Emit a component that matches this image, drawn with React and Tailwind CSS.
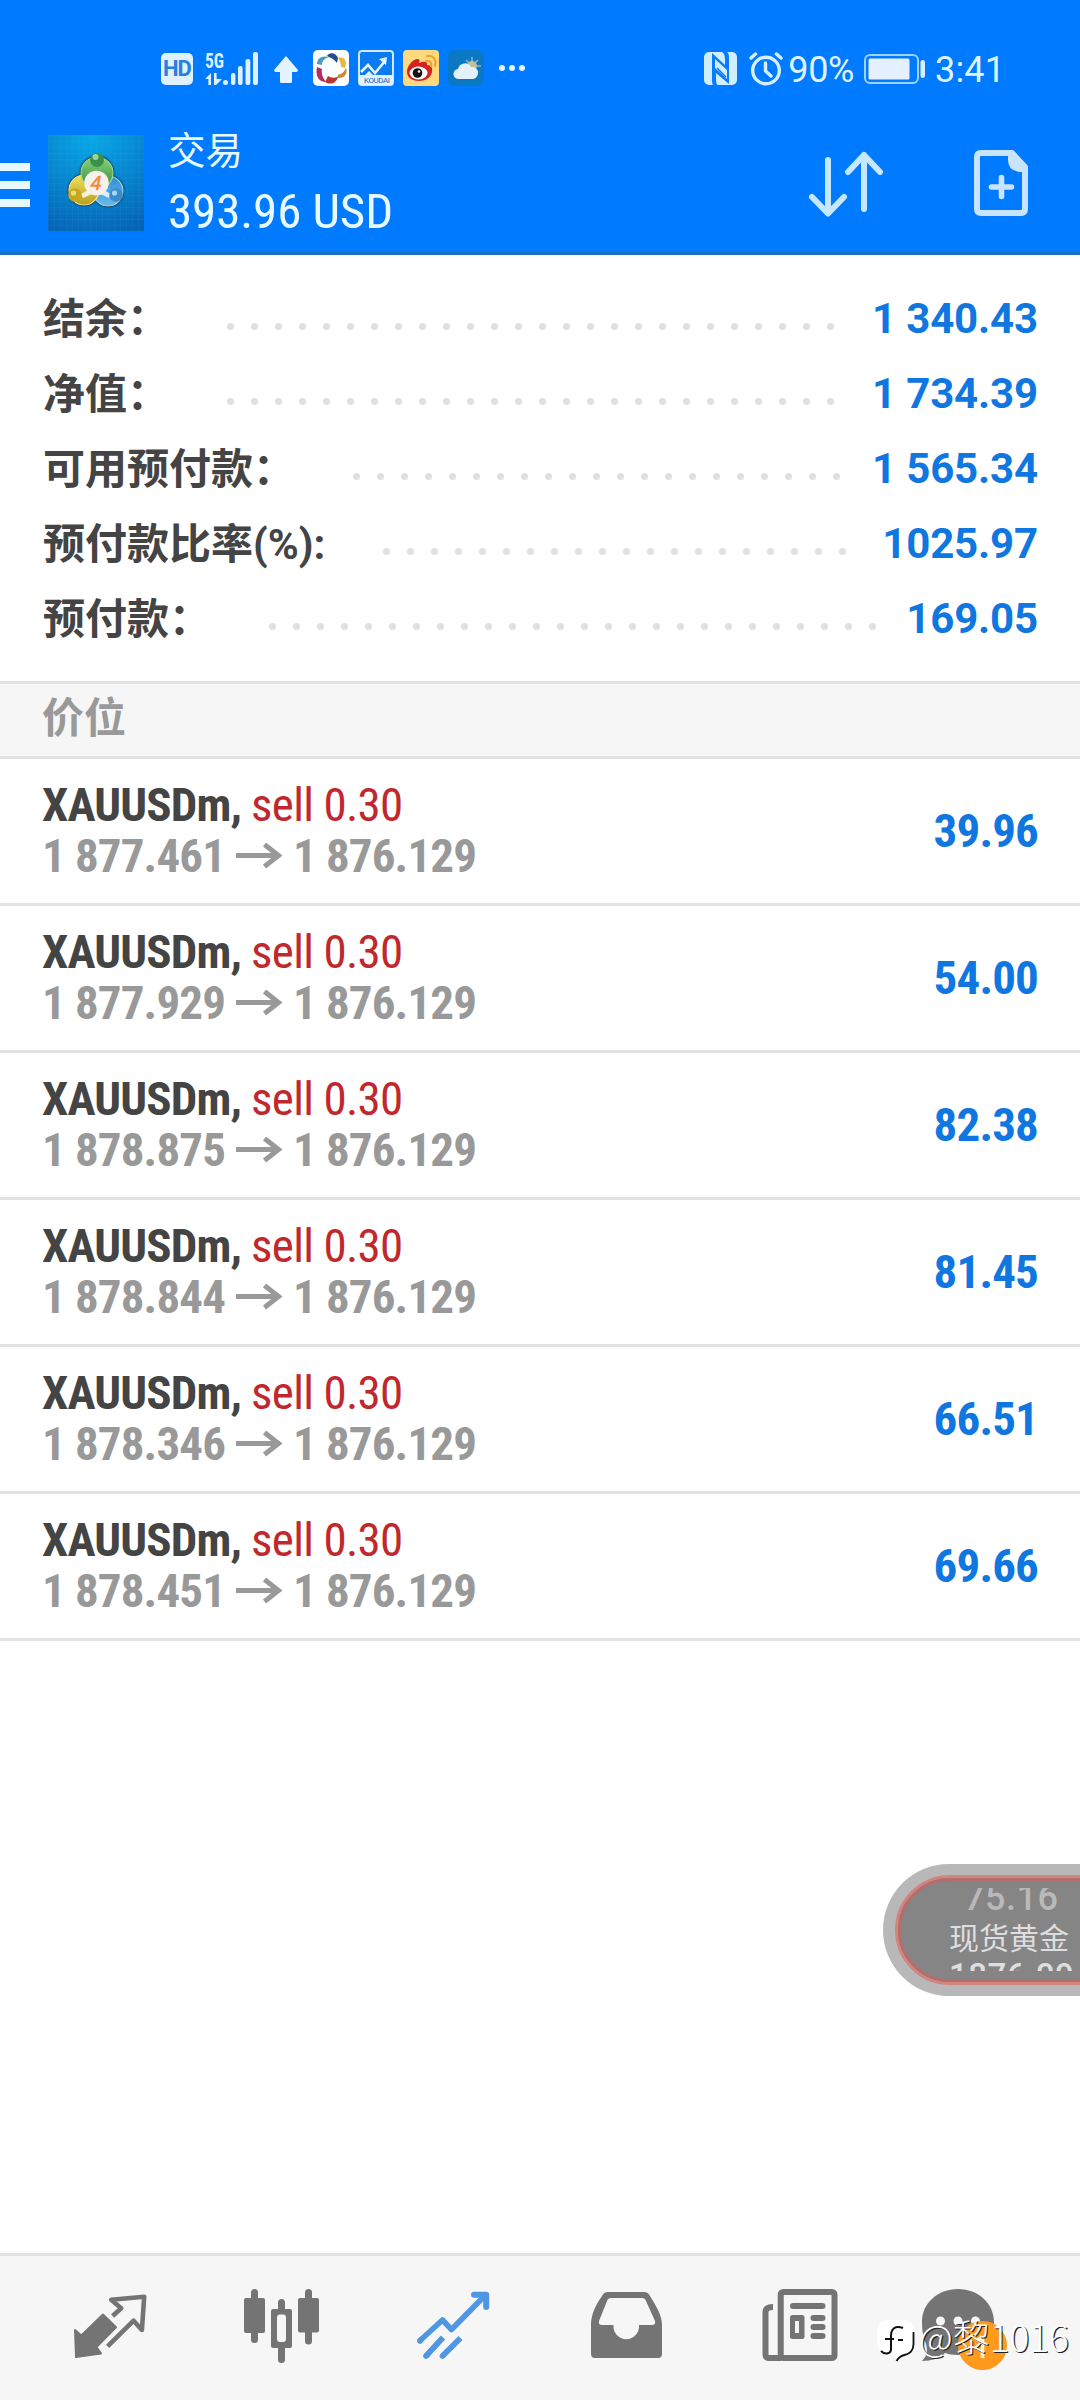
import React from "react";

const accountRows = [
  { label: "结余：", value: "1 340.43", dots: 26 },
  { label: "净值：", value: "1 734.39", dots: 26 },
  { label: "可用预付款：", value: "1 565.34", dots: 21 },
  { label: "预付款比率(%):", value: "1025.97", dots: 20 },
  { label: "预付款：", value: "169.05", dots: 26 },
];

const positions = [
  { open: "1 877.461", current: "1 876.129", profit: "39.96" },
  { open: "1 877.929", current: "1 876.129", profit: "54.00" },
  { open: "1 878.875", current: "1 876.129", profit: "82.38" },
  { open: "1 878.844", current: "1 876.129", profit: "81.45" },
  { open: "1 878.346", current: "1 876.129", profit: "66.51" },
  { open: "1 878.451", current: "1 876.129", profit: "69.66" },
];

const SignalIcon = () => (
  <svg width="54" height="36" viewBox="0 0 54 36" fill="#dff1ff" className="overflow-visible">
    <text x="0" y="16.500" fontSize="21" fontWeight="700" textLength="19" lengthAdjust="spacingAndGlyphs" className="font-['Roboto_Condensed']">
      5G
    </text>
    <path d="M0 28l6-6v12H3.400v-6zM9 22h2.600v6H17l-6 6H9z" />
    <rect x="18" y="29" width="5" height="5" rx="2.500" />
    <rect x="26" y="22" width="4.400" height="12" rx="2" />
    <rect x="33" y="15" width="4.600" height="19" rx="2" />
    <rect x="40.500" y="8" width="4.800" height="26" rx="2" />
    <rect x="48" y="1" width="5" height="33" rx="2" />
  </svg>
);

const RingAppIcon = () => (
  <svg width="36" height="36" viewBox="0 0 36 36">
    <rect width="36" height="36" rx="5" fill="#fff" />
    <path d="M14 6c2-4 9-4 11 2l-1 5c-3-4-6-5-10-7z" fill="#274b8c" />
    <path d="M4 14c0-6 5-9 12-7-5 2-7 4-7 8z" fill="#4b9cc0" />
    <path d="M25 8c6-2 10 3 7 10l-4-1c0-4-1-6-3-9z" fill="#e9b93e" />
    <path d="M33 18c2 5-1 11-9 10l1-3c4-1 6-3 8-7z" fill="#c98a31" />
    <path d="M25 27c-2 7-8 8-13 5l3-6c3 2 6 2 10 1z" fill="#b7382f" />
    <path d="M13 32c-7 0-11-6-9-15l5 2c-1 5 1 9 4 13z" fill="#b32a64" />
  </svg>
);

const KoudaiIcon = () => (
  <svg width="36" height="36" viewBox="0 0 36 36">
    <rect x="1" y="1" width="34" height="34" rx="3" fill="#0a7bf2" stroke="#cfeaff" strokeWidth="2" />
    <path d="M1 25h6l4-4 4 4h20v10H1z" fill="#e0f2ff" />
    <path d="M3 22l7-7 7 8 10-12" fill="none" stroke="#e6f3ff" strokeWidth="2.600" />
    <path d="M21 9l8-2-1 8z" fill="#e6f3ff" />
    <text x="6" y="33" fontSize="8" fill="#2a62ae" textLength="26" className="font-[Roboto]">
      KOUDAI
    </text>
  </svg>
);

const WeiboIcon = () => (
  <svg width="36" height="36" viewBox="0 0 36 36">
    <rect width="36" height="36" rx="4" fill="#ffd980" />
    <path d="M4 22c0-6 5-12 10-13 3 0 3 2 2 4 4-2 9-2 8 2 4 0 6 3 5 7-1 6-7 9-13 9S4 28 4 22z" fill="#d6231f" />
    <ellipse cx="15.500" cy="23" rx="9" ry="6.500" fill="#fff" />
    <circle cx="14.500" cy="23" r="4.800" fill="#111" />
    <circle cx="16" cy="21.500" r="1.300" fill="#fff" />
    <path d="M23 11c4-1 6 2 5 5M24 6c7-1 10 5 8 10" fill="none" stroke="#efa42f" strokeWidth="2.200" strokeLinecap="round" />
  </svg>
);

const WeatherIcon = () => (
  <svg width="36" height="36" viewBox="0 0 36 36">
    <rect width="36" height="36" rx="7" fill="#0b78c4" />
    <path d="M24 7v18M15 16h18M18 10l12 12M30 10L18 22" stroke="#9cb7ab" strokeWidth="1.500" />
    <circle cx="24" cy="16" r="5" fill="#c9bfa0" />
    <path d="M11 29a5 5 0 0 1-1-10 7 7 0 0 1 13-2 6 6 0 0 1 2 12z" fill="#e3f1fb" />
  </svg>
);

const NfcIcon = () => (
  <svg width="34" height="34" viewBox="0 0 34 34">
    <rect width="33" height="33" rx="5" fill="#cfeeff" />
    <path d="M8 1l13 12V9c0-4 0-7-3-9h5c2 1 2 4 2 7v25L12 21v5c0 4 0 6 3 8h-5c-2-1-2-4-2-7z" fill="#0a7bff" />
    <path d="M11 7l12 11v9L11 16z" fill="#cfeeff" />
    <path d="M13 16l9 9" stroke="#0a7bff" strokeWidth="1.500" />
  </svg>
);

const AlarmIcon = () => (
  <svg width="34" height="34" viewBox="0 0 34 34" fill="none" stroke="#d5efff" strokeLinecap="round">
    <circle cx="17" cy="18.500" r="13.300" strokeWidth="3.400" />
    <path d="M16.500 11v8l5.500 5" strokeWidth="3.400" strokeLinejoin="round" />
    <path d="M2 6l4.500-4M32 6l-4.500-4" strokeWidth="3.400" />
  </svg>
);

const StatusBar = () => (
  <div className="flex h-[135px] items-start pr-[80px] pl-[161px] text-[#dff3ff]">
    <div className="mt-[53px] flex h-[32px] w-8 items-center justify-center rounded-[5px] bg-[#dff1ff] font-[Roboto] text-[22px] leading-none font-bold tracking-[-0.8px] text-[#2a7fdc]">
      HD
    </div>
    <div className="mt-[51px] ml-3">
      <SignalIcon />
    </div>
    <svg className="mt-[55px] ml-[14px]" width="26" height="29" viewBox="0 0 26 29">
      <path d="M13 1L25 15q0 2-2 2h-4v10q0 1-1 1H8q-1 0-1-1V17H3q-2 0-2-2z" fill="#e3f3ff" />
    </svg>
    <div className="mt-[50px] ml-[14px] flex gap-[9px]">
      <RingAppIcon />
      <KoudaiIcon />
      <WeiboIcon />
      <WeatherIcon />
    </div>
    <div className="mt-[65px] ml-[15px] flex gap-1">
      <span className="size-1.5 rounded-full bg-[#dff3ff]" />
      <span className="size-1.5 rounded-full bg-[#dff3ff]" />
      <span className="size-1.5 rounded-full bg-[#dff3ff]" />
    </div>
    <div className="mt-[52px] ml-auto flex h-[34px] items-center font-[Roboto] text-[36px] leading-[34px]">
      <NfcIcon />
      <div className="ml-[11px]">
        <AlarmIcon />
      </div>
      <span className="mt-[2px] ml-[5px] tracking-[-0.4px]">90%</span>
      <svg className="ml-[10px]" width="61" height="30" viewBox="0 0 61 30">
        <rect x="1" y="1" width="53" height="28" rx="5" fill="none" stroke="#9ed3ff" strokeWidth="2" />
        <rect x="4.500" y="4.500" width="41" height="21" rx="1.500" fill="#e4f0ff" />
        <rect x="56.500" y="6" width="4.500" height="18" rx="2.200" fill="#d5efff" />
      </svg>
      <span className="mt-[2px] ml-[10px] w-[65px] tracking-[0.2px]">3:41</span>
    </div>
  </div>
);

const MetaTraderLogo = () => (
  <svg width="96" height="96" viewBox="0 0 96 96">
    <defs>
      <radialGradient id="logoBg" cx="45%" cy="0%" r="110%">
        <stop offset="0" stopColor="#08a9e6" />
        <stop offset="0.5" stopColor="#0786cf" />
        <stop offset="1" stopColor="#0661b3" />
      </radialGradient>
      <pattern id="logoGrid" width="6" height="6" patternUnits="userSpaceOnUse">
        <path d="M6 0H0V6" fill="none" stroke="#3fb2e6" strokeOpacity="0.14" strokeWidth="1" />
      </pattern>
      <linearGradient id="logoGreen" x1="0" y1="0" x2="0" y2="1">
        <stop offset="0" stopColor="#8ed27a" />
        <stop offset="1" stopColor="#2f8a3f" />
      </linearGradient>
      <linearGradient id="logoYellow" x1="0" y1="0" x2="0" y2="1">
        <stop offset="0" stopColor="#f0df5c" />
        <stop offset="1" stopColor="#b9a01f" />
      </linearGradient>
      <linearGradient id="logoBlue" x1="0" y1="0" x2="0" y2="1">
        <stop offset="0" stopColor="#2f8fd6" />
        <stop offset="1" stopColor="#69b9ee" />
      </linearGradient>
    </defs>
    <rect width="96" height="96" fill="url(#logoBg)" />
    <rect width="96" height="96" fill="url(#logoGrid)" />
    <g stroke="#0d4f80" strokeOpacity="0.35" strokeWidth="3">
      <circle cx="60" cy="56" r="16" />
      <circle cx="36" cy="55" r="16" />
      <circle cx="49" cy="38" r="17" />
    </g>
    <circle cx="60" cy="56" r="15" fill="url(#logoBlue)" stroke="#a9dbef" strokeWidth="1.200" />
    <circle cx="36" cy="55" r="15" fill="url(#logoYellow)" stroke="#f1eb9b" strokeWidth="1.200" />
    <circle cx="49" cy="38" r="16" fill="url(#logoGreen)" stroke="#9bdc93" strokeWidth="1.200" />
    <circle cx="49" cy="25" r="7" fill="#3c9148" />
    <circle cx="47.500" cy="22" r="3" fill="#9cd597" />
    <path d="M33 59l9-5 2 5-9 4z" fill="#f5f0d8" />
    <path d="M63 59l-9-5-2 5 9 4z" fill="#dceefa" />
    <circle cx="27" cy="60" r="6.800" fill="#c6a91e" />
    <circle cx="25.500" cy="58" r="2.600" fill="#eddf78" />
    <circle cx="68" cy="60" r="6.800" fill="#3a8ccb" />
    <circle cx="66.500" cy="58" r="2.600" fill="#a5d7f5" />
    <circle cx="48.500" cy="48" r="12.300" fill="#f7f1ec" />
    <text x="48" y="55" fontSize="20" textAnchor="middle" fontStyle="italic" fill="#f08a3c" stroke="#f08a3c" strokeWidth="0.500" className="font-[Roboto]">
      4
    </text>
  </svg>
);

const TitleBar = () => (
  <div className="flex h-[117px] items-start">
    <div className="mt-[28px] flex w-[30px] flex-col gap-[10px]">
      <span className="h-2 bg-[#e8f8ff]" />
      <span className="h-2 bg-[#e8f8ff]" />
      <span className="h-2 bg-[#e8f8ff]" />
    </div>
    <div className="ml-[18px]">
      <MetaTraderLogo />
    </div>
    <div className="ml-6 text-[#e8faff]">
      <div className="-mt-[10px] font-['Noto_Sans_CJK_SC',sans-serif] text-[37.500px] leading-[46px]">交易</div>
      <div className="mt-3 font-['Roboto_Condensed',sans-serif] text-[49px] leading-[58px] tracking-[-0.1px]">393.96 USD</div>
    </div>
    <svg className="mt-[14px] ml-auto" width="76" height="68" viewBox="0 0 76 68" fill="none" stroke="#c6e8ff" strokeWidth="6" strokeLinecap="round" strokeLinejoin="round">
      <path d="M20 11v53M4 48l16 16.500L36 48" />
      <path d="M56 60V6M40 23L56 6l16 17" />
    </svg>
    <svg className="mt-[14px] mr-[49px] ml-[89px]" width="58" height="70" viewBox="0 0 58 70">
      <path d="M8 4h31l13 14v42q0 4-4 4H8q-4 0-4-4V8q0-4 4-4z" fill="none" stroke="#c9e4ff" strokeWidth="6" strokeLinejoin="round" />
      <path d="M35 5h5l12 14v4h-5q-12-1-12-12z" fill="#c9e4ff" />
      <path d="M28.500 28.500v19M18.500 38h20" stroke="#c9e4ff" strokeWidth="5.600" strokeLinecap="round" />
    </svg>
  </div>
);

const AccountSummary = () => (
  <div className="pt-[26px] pb-[25px]">
    {accountRows.map((row) => (
      <div key={row.label} className="flex h-[75px] items-center pr-[42px] pl-[43px] text-[42px] leading-[75px] font-bold">
        <span className="pt-[2px] whitespace-nowrap text-[#444444] font-[Roboto,'Noto_Sans_CJK_SC',sans-serif]">{row.label}</span>
        <span className="mt-[15px] ml-[49px] flex">
          {Array.from({ length: row.dots }).map((_, i) => (
            <span key={i} className="flex w-6 justify-center">
              <span className="size-[7px] rounded-full bg-[#e0e0e0]" />
            </span>
          ))}
        </span>
        <span className="ml-auto whitespace-nowrap tracking-[-0.15px] text-[#1077e0] font-[Roboto,sans-serif]">{row.value}</span>
      </div>
    ))}
  </div>
);

const PositionRow = ({ open, current, profit }) => (
  <div className="flex h-[147px] items-center justify-between border-b-[3px] border-[#e2e2e2] px-[42px] pb-[2px] font-['Roboto_Condensed',sans-serif] text-[47px] leading-[51px] font-bold tracking-[-0.85px]">
    <div>
      <div className="text-[#444444]">
        XAUUSDm, <span className="font-normal tracking-[-0.7px] text-[#c0282d]">sell 0.30</span>
      </div>
      <div className="flex items-center text-[#999999]">
        <span className="w-[194px]">{open}</span>
        <svg className="w-[57px]" width="57" height="26" viewBox="0 0 57 26" fill="none" stroke="#999999" strokeWidth="5">
          <path d="M0 12.500h42" />
          <path d="M28.500 1.500L42.500 12.500 28.500 23.500" />
        </svg>
        <span>{current}</span>
      </div>
    </div>
    <span className="text-[#1077e0]">{profit}</span>
  </div>
);

const QuotesIcon = () => (
  <svg width="84" height="84" viewBox="0 0 84 84">
    <path d="M7 50l6.300 5.500L35 34.500 48 47.300 28.500 67l4.500 6.500L8 77z" fill="#747474" stroke="#747474" strokeWidth="2" strokeLinejoin="round" />
    <path d="M44.600 36l8.600-7.700-10-8.600 33-3-2.300 33.300-8.300-9.300-26 25.600" fill="none" stroke="#747474" strokeWidth="4.600" strokeLinejoin="round" />
  </svg>
);

const ChartIcon = () => (
  <svg width="84" height="84" viewBox="0 0 84 84" fill="#747474">
    <rect x="4" y="18" width="21" height="35" rx="2" />
    <rect x="11" y="9" width="7" height="54" rx="3.500" />
    <rect x="31" y="29" width="21" height="39" rx="2" />
    <rect x="38" y="19" width="7" height="64" rx="3.500" />
    <rect x="37" y="34.500" width="9" height="27.500" rx="3" fill="#f6f6f6" />
    <rect x="58" y="18" width="21" height="34.500" rx="2" />
    <rect x="65" y="9" width="7" height="55.500" rx="3.500" />
  </svg>
);

const TradeIcon = () => (
  <svg width="84" height="84" viewBox="0 0 84 84" fill="none" stroke="#4f97e3" strokeWidth="5.600">
    <path d="M7 61.500l23.500-21.500 9 9.500L72 16.500" strokeLinejoin="round" />
    <path d="M62 14.800h12.200V27" strokeLinecap="round" strokeLinejoin="round" strokeWidth="6" />
    <path d="M14 76l17-18.500M30.500 76l18-18" strokeWidth="5.800" />
    <path d="M8 61l1-1M14 76l1-1M30.500 76l1-1" strokeLinecap="round" />
  </svg>
);

const HistoryIcon = () => (
  <svg width="84" height="84" viewBox="0 0 84 84">
    <path d="M24 12h36q4 0 6 4c6 10 12 19 12 29v29q0 4-4 4H11q-4 0-4-4V45c0-10 4-19 11-29q2-4 6-4z" fill="#747474" />
    <path d="M27 18h31q3 0 4 3l9 20q1 4-3 4H55v2.500a12.800 12.800 0 0 1-25.500 0V45H18q-4 0-3-4l8-20q1-3 4-3z" fill="#f6f6f6" />
  </svg>
);

const NewsIcon = () => (
  <svg width="84" height="84" viewBox="0 0 84 84" fill="#747474">
    <path d="M25 78H12.500q-3 0-3-4V32q0-5 7.500-5" fill="none" stroke="#747474" strokeWidth="6" />
    <rect x="24.700" y="12" width="53.800" height="66" rx="2.500" fill="#f6f6f6" stroke="#747474" strokeWidth="6" />
    <rect x="34" y="23" width="35.500" height="6" rx="3" />
    <rect x="34" y="35" width="14.500" height="24" rx="2.500" />
    <rect x="39" y="41" width="4" height="12" fill="#f6f6f6" />
    <rect x="54.500" y="35" width="15" height="6" rx="3" />
    <rect x="54.500" y="44" width="15" height="6" rx="3" />
    <rect x="54.500" y="53" width="15" height="6" rx="3" />
  </svg>
);

const ChatIcon = () => (
  <svg width="84" height="84" viewBox="0 0 84 84" className="overflow-visible">
    <path d="M30 9c20 0 36 14 36 33S50 75 30 75c-5 0-10-1-13-2-5 5-13 8-23 8 5-5 6-10 4-17-3-6-4-14-4-22C-6 23 10 9 30 9z" fill="#747474" />
    <circle cx="12.500" cy="41" r="4.500" fill="#f6f6f6" />
    <circle cx="30" cy="41" r="4.500" fill="#f6f6f6" />
    <circle cx="47.500" cy="41" r="4.500" fill="#f6f6f6" />
    <circle cx="54.500" cy="65.500" r="24.500" fill="#ff9a1c" />
    <path d="M49 60l5.500-2v20" fill="none" stroke="#fff3d0" strokeWidth="3.600" />
  </svg>
);

const BottomNav = () => (
  <div className="flex h-[147px] border-t-[3px] border-[#e2e2e2] bg-[#f6f6f6] px-6 pt-6">
    {[QuotesIcon, ChartIcon, TradeIcon, HistoryIcon, NewsIcon, ChatIcon].map((Icon, i) => (
      <div key={i} className="flex flex-1 justify-center">
        <Icon />
      </div>
    ))}
  </div>
);

const FloatingQuote = () => (
  <div className="absolute top-[1864px] right-0 h-[132px] w-[197px] overflow-hidden rounded-l-[66px] bg-[#b8b8b8] py-[11px] pl-3">
    <div className="flex h-[110px] w-[240px] flex-col rounded-l-[55px] border-[3px] border-[#d4847f] bg-[#858585]">
      <div className="flex h-full flex-col rounded-l-[52px] border-[3px] border-[#b36f6c] pl-[48px] font-[Roboto,'Noto_Sans_CJK_SC',sans-serif]">
        <div className="mt-[7px] h-[24px] overflow-hidden pl-[15px]">
          <div className="-mt-[11px] text-[36px] leading-[42px] font-medium tracking-[0.5px] text-[#b9b9b9]">75.16</div>
        </div>
        <div className="mt-[5px] text-[30px] leading-[44px] text-[#dedede]">现货黄金</div>
        <div className="mt-px h-[9px] overflow-hidden text-[33px] leading-[30px] font-medium tracking-[0.5px] text-[#dedede]">
          <div className="-mt-px">1876.09</div>
        </div>
      </div>
    </div>
  </div>
);

const Watermark = () => (
  <div className="absolute top-[2309px] left-[876px] flex items-center">
    <svg className="mt-[5px]" width="40" height="48" viewBox="0 0 40 48">
      <path d="M13 6h13q12 0 12 12v12q0 10-9 12-5 1-7 6-3-5-9-7Q1 38 1 28V18Q1 6 13 6z" fill="#fff" />
      <path d="M37.500 18v12q0 9-9 11-5 1-8 6" fill="none" stroke="#111" strokeWidth="1.800" />
      <path d="M27 14c-8-3-12 1-12 8v14c-1 4-6 5-10 1M9 25h9M22 26h5" fill="none" stroke="#111" strokeWidth="2" />
    </svg>
    <span className="ml-[3px] whitespace-nowrap text-[37px] leading-[52px] font-light text-white font-['Noto_Sans_CJK_SC',sans-serif] [text-shadow:1.2px_1.2px_0.5px_#222]">
      @黎1016
    </span>
  </div>
);

export default function App() {
  return (
    <div className="relative flex h-[2400px] w-[1080px] flex-col overflow-hidden bg-white">
      <header className="h-[255px] border-b-[3px] border-[#1b6fc0] bg-[#007aff]">
        <StatusBar />
        <TitleBar />
      </header>
      <AccountSummary />
      <div className="h-[78px] border-y-[3px] border-[#e2e2e2] bg-[#f6f6f6] px-[42px] text-[42px] leading-[70px] font-bold text-[#999999] font-[Roboto,'Noto_Sans_CJK_SC',sans-serif]">
        价位
      </div>
      <main className="flex-1">
        {positions.map((p) => (
          <PositionRow key={p.open} {...p} />
        ))}
      </main>
      <BottomNav />
      <FloatingQuote />
      <Watermark />
    </div>
  );
}
